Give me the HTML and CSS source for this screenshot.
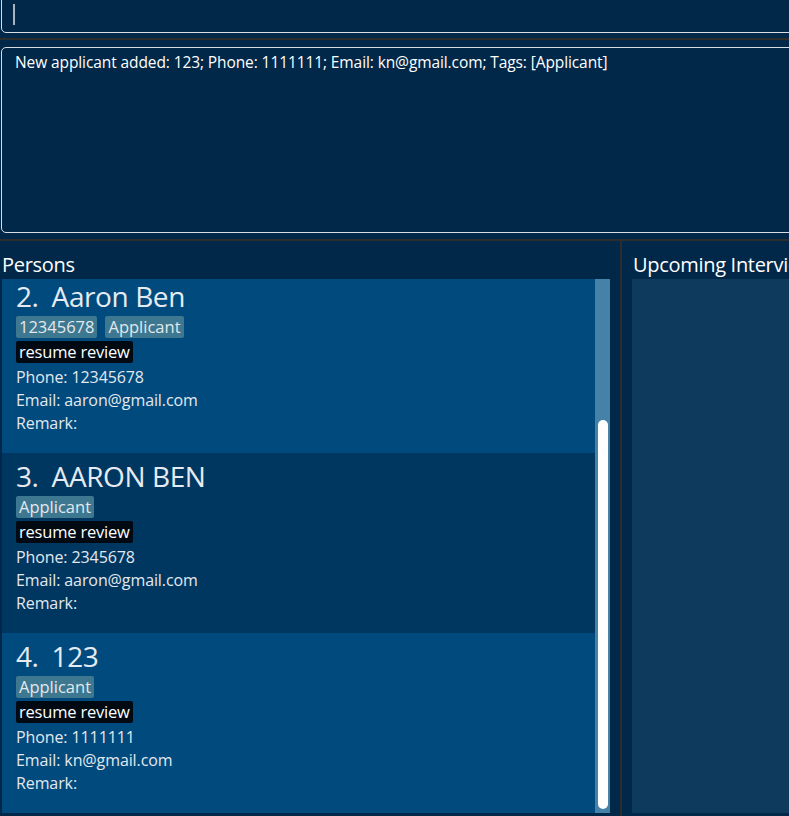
FILE: index.html
```html
<!DOCTYPE html>
<html>
<head>
<meta charset="utf-8">
<link rel="stylesheet" href="styles.css">
</head>
<body>
<div class="app">
  <div class="command-row">
    <div class="command-box"><span class="caret"></span></div>
  </div>
  <div class="sep"></div>
  <div class="result-row">
    <div class="result-box">New applicant added: 123; Phone: 1111111; Email: kn@gmail.com; Tags: [Applicant]</div>
  </div>
  <div class="sep sep2"></div>
  <div class="panels">
    <div class="left">
      <div class="panel-title">Persons</div>
      <div class="list">
        <div class="cards">
          <div class="card odd first">
            <div class="name"><span class="idx">2.</span>Aaron Ben</div>
            <div class="tags"><span class="tag">12345678</span><span class="tag">Applicant</span></div>
            <div class="tags"><span class="stage">resume review</span></div>
            <div class="line">Phone: 12345678</div>
            <div class="line">Email: aaron@gmail.com</div>
            <div class="line">Remark:</div>
          </div>
          <div class="card even">
            <div class="name"><span class="idx">3.</span>AARON BEN</div>
            <div class="tags"><span class="tag">Applicant</span></div>
            <div class="tags"><span class="stage">resume review</span></div>
            <div class="line">Phone: 2345678</div>
            <div class="line">Email: aaron@gmail.com</div>
            <div class="line">Remark:</div>
          </div>
          <div class="card odd">
            <div class="name"><span class="idx">4.</span>123</div>
            <div class="tags"><span class="tag">Applicant</span></div>
            <div class="tags"><span class="stage">resume review</span></div>
            <div class="line">Phone: 1111111</div>
            <div class="line">Email: kn@gmail.com</div>
            <div class="line">Remark:</div>
          </div>
        </div>
        <div class="scrollbar"><div class="thumb"></div></div>
      </div>
    </div>
    <div class="divider"></div>
    <div class="right">
      <div class="panel-title rt">Upcoming Interviews</div>
      <div class="right-body"></div>
    </div>
  </div>
</div>
</body>
</html>
```

FILE: styles.css
```css
html, body {
  margin: 0;
  padding: 0;
  background: #012849;
  overflow: hidden;
  width: 789px;
  height: 816px;
}
.app {
  width: 830px;
  height: 816px;
  display: flex;
  flex-direction: column;
  font-family: "Open Sans", "Noto Sans", sans-serif;
  color: #ffffff;
}
.command-row {
  padding: 0 0 0 1px;
  margin-top: -6px;
}
.command-box {
  height: 39px;
  border: 1px solid #d8dde3;
  border-radius: 5px;
  box-sizing: border-box;
  background: #012849;
  display: flex;
  align-items: flex-end;
  padding: 0 0 7px 11px;
}
.caret {
  width: 2px;
  height: 21px;
  background: #a9b4bf;
}
.sep {
  height: 2px;
  background: #2d2d2d;
  margin-top: 5px;
}
.result-row {
  padding: 0 0 0 1px;
  margin-top: 7px;
}
.result-box {
  height: 186px;
  border: 1px solid #d8dde3;
  border-radius: 5px;
  box-sizing: border-box;
  padding: 4px 13px;
  font-size: 15.5px;
  line-height: 20px;
  color: #ffffff;
  letter-spacing: -0.1px;
  white-space: nowrap;
}
.sep2 {
  margin-top: 6px;
}
.panels {
  flex: 1;
  display: flex;
  min-height: 0;
}
.left {
  width: 620px;
  display: flex;
  flex-direction: column;
  padding-left: 2px;
  box-sizing: border-box;
}
.panel-title {
  height: 38px;
  font-size: 20px;
  line-height: 22px;
  padding-top: 13px;
  box-sizing: border-box;
  color: #ffffff;
  letter-spacing: -0.3px;
  white-space: nowrap;
}
.list {
  display: flex;
  width: 608px;
  height: 534px;
  overflow: hidden;
}
.cards {
  width: 593px;
  display: flex;
  flex-direction: column;
}
.card {
  height: 180px;
  flex: none;
  box-sizing: border-box;
  padding: 8px 0 0 14px;
  color: #e3e8ee;
}
.card.first {
  height: 174px;
  padding-top: 2px;
}
.odd { background: #004a7d; }
.even { background: #003760; }
.name {
  font-size: 28px;
  line-height: 30px;
  height: 35px;
  color: #e6ebf1;
  letter-spacing: -0.4px;
  white-space: nowrap;
}
.idx {
  margin-right: 13px;
}
.tags {
  display: flex;
  gap: 8px;
  height: 25px;
  align-items: flex-start;
}
.tag {
  display: inline-block;
  background: #3d7890;
  color: #e3e8ee;
  font-size: 16.5px;
  line-height: 22px;
  height: 22px;
  padding: 0 3px;
  border-radius: 2px;
}
.stage {
  display: inline-block;
  background: #010a12;
  color: #ffffff;
  font-size: 16.5px;
  line-height: 22px;
  height: 22px;
  padding: 0 3px;
  border-radius: 2px;
  letter-spacing: -0.2px;
}
.line {
  font-size: 16px;
  line-height: 23px;
  letter-spacing: -0.1px;
}
.scrollbar {
  width: 15px;
  background: #4682a8;
  display: flex;
  flex-direction: column;
  align-items: center;
}
.thumb {
  margin-top: 141px;
  width: 10px;
  height: 389px;
  background: #ffffff;
  border-radius: 5px;
}
.divider {
  width: 2px;
  background: #2d2d2d;
}
.right {
  flex: 1;
  display: flex;
  flex-direction: column;
  padding-left: 10px;
}
.rt {
  padding-left: 1px;
}
.right-body {
  height: 534px;
  background: #0e3a5e;
}
```
